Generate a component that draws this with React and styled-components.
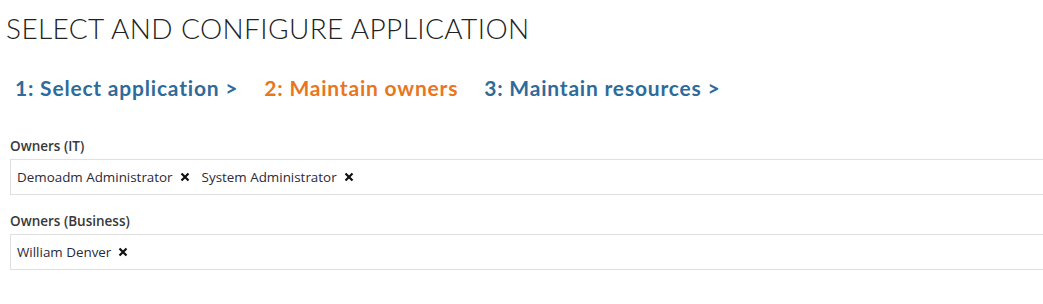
import React from 'react';
import styled, { createGlobalStyle } from 'styled-components';

const GlobalStyle = createGlobalStyle`
  html, body {
    margin: 0;
    padding: 0;
    background: #fff;
    overflow: hidden;
  }
  body {
    font-family: "Open Sans", "Liberation Sans", sans-serif;
    color: #333;
  }
`

const Page = styled.div`
  width: 1043px;
  height: 304px;
  overflow: hidden;
  padding: 11px 0 0 0;
  box-sizing: border-box;
`

const Title = styled.h1`
  margin: 0 0 0 6px;
  font-family: Lato, "Open Sans", sans-serif;
  font-weight: 300;
  font-size: 28px;
  line-height: 34px;
  letter-spacing: 0.4px;
  color: #222;
`

const Steps = styled.div`
  display: flex;
  gap: 26px;
  margin: 30px 0 0 15px;
`

const Step = styled.span`
  font-family: Lato, "Open Sans", sans-serif;
  font-weight: 700;
  font-size: 21px;
  line-height: 26px;
  letter-spacing: 0.8px;
  color: ${p => (p.active ? '#e8761e' : '#2f6b9a')};
`

const Form = styled.div`
  display: flex;
  flex-direction: column;
  margin: 36px 0 0 10px;
`

const Label = styled.label`
  font-size: 13.5px;
  font-weight: 600;
  line-height: 18px;
  color: #383838;
  margin-top: ${p => (p.first ? '0' : '17px')};
  margin-bottom: 4px;
`

const Box = styled.div`
  width: 1100px;
  height: 36px;
  box-sizing: border-box;
  border: 1px solid #e0e0e0;
  display: flex;
  align-items: center;
  gap: 12px;
  padding: 0 0 0 6px;
`

const Chip = styled.span`
  display: inline-flex;
  align-items: center;
  gap: 7px;
  font-size: 13.4px;
  color: #2a2a3a;
  line-height: 18px;
`

const Remove = ({ size = 10 }) => (
  <svg width={size} height={size} viewBox="0 0 10 10">
    <path d="M1.5 1.5 L8.5 8.5 M8.5 1.5 L1.5 8.5" stroke="#111" strokeWidth="2.2" strokeLinecap="butt" />
  </svg>
)

const fields = [
  { label: 'Owners (IT)', owners: ['Demoadm Administrator', 'System Administrator'] },
  { label: 'Owners (Business)', owners: ['William Denver'] },
]

export default function App() {
  return (
    <Page>
      <GlobalStyle />
      <Title>SELECT AND CONFIGURE APPLICATION</Title>
      <Steps>
        <Step>1: Select application &gt;</Step>
        <Step active>2: Maintain owners</Step>
        <Step>3: Maintain resources &gt;</Step>
      </Steps>
      <Form>
        {fields.map((f, i) => (
          <React.Fragment key={f.label}>
            <Label first={i === 0}>{f.label}</Label>
            <Box>
              {f.owners.map(name => (
                <Chip key={name}>
                  {name}
                  <Remove />
                </Chip>
              ))}
            </Box>
          </React.Fragment>
        ))}
      </Form>
    </Page>
  )
}
